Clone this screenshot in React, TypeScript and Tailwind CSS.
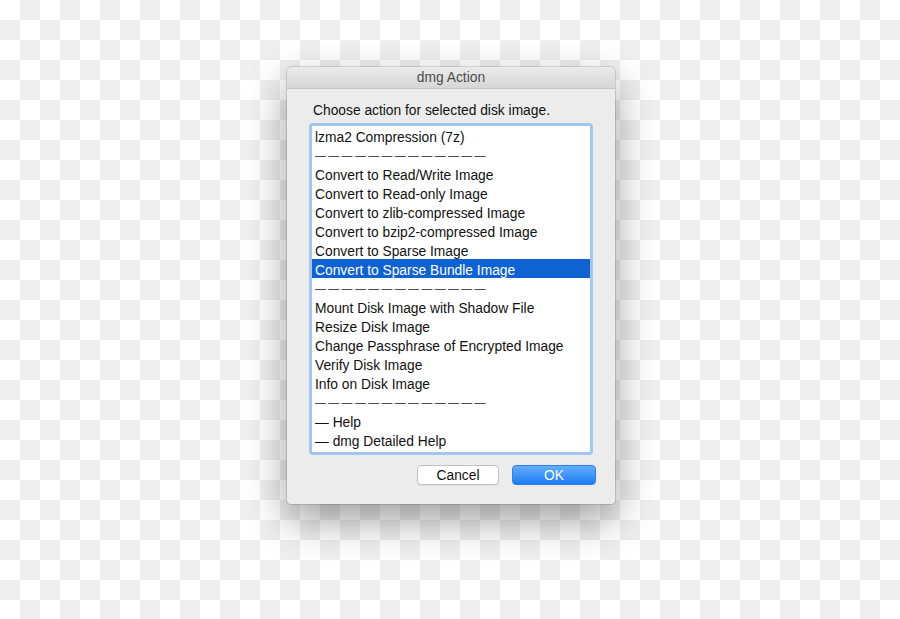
const items: { label: string; kind?: "sep" | "selected" }[] = [
  { label: "lzma2 Compression (7z)" },
  { label: "—————————————", kind: "sep" },
  { label: "Convert to Read/Write Image" },
  { label: "Convert to Read-only Image" },
  { label: "Convert to zlib-compressed Image" },
  { label: "Convert to bzip2-compressed Image" },
  { label: "Convert to Sparse Image" },
  { label: "Convert to Sparse Bundle Image", kind: "selected" },
  { label: "—————————————", kind: "sep" },
  { label: "Mount Disk Image with Shadow File" },
  { label: "Resize Disk Image" },
  { label: "Change Passphrase of Encrypted Image" },
  { label: "Verify Disk Image" },
  { label: "Info on Disk Image" },
  { label: "—————————————", kind: "sep" },
  { label: "— Help" },
  { label: "— dmg Detailed Help" },
];

export default function App() {
  return (
    <div
      className="h-[619px] w-[900px] overflow-hidden bg-[conic-gradient(#efefef_25%,#fff_0_50%,#efefef_0_75%,#fff_0)] bg-size-[40px_40px] pl-[287px] pt-[67px]"
      style={{ fontFamily: '"Liberation Sans", Arial, sans-serif' }}
    >
      {/* Dialog window */}
      <div className="w-[328px] rounded-t-[5px] rounded-b-[4px] bg-[#ececec] shadow-[0_16px_40px_rgba(0,0,0,0.38),0_0_0_1px_rgba(0,0,0,0.12)]">
        {/* Title bar */}
        <div className="flex h-[22px] items-center justify-center rounded-t-[5px] border-b border-[#c4c4c4] bg-gradient-to-b from-[#ebebeb] to-[#d6d6d6] pt-[2px] text-[13.8px] text-[#4d4d4d]">
          dmg Action
        </div>

        <div className="px-[22px] pb-[19px] pt-[13px]">
          <div className="pl-[4px] pt-[1px] text-[13.8px] leading-[16px] text-[#111]">
            Choose action for selected disk image.
          </div>

          {/* List box with focus ring */}
          <div className="mt-[4px] rounded-[4px] border-[3px] border-[#a2c5f2] bg-white pb-[3px]">
            {items.map((it, i) =>
              it.kind === "sep" ? (
                <div
                  key={i}
                  className="h-[19px] pl-[3px] pt-[1px] text-[11px] leading-[19px] tracking-[2.3px] text-[#222]"
                >
                  {it.label}
                </div>
              ) : (
                <div
                  key={i}
                  className={`h-[19px] pl-[3px] pt-[3px] text-[13.8px] leading-[17px] ${
                    it.kind === "selected"
                      ? "bg-[#0f62d2] text-white"
                      : "text-[#111]"
                  }`}
                >
                  {it.label}
                </div>
              )
            )}
          </div>

          {/* Buttons */}
          <div className="mr-[-3px] mt-[10px] flex justify-end gap-[13px]">
            <button className="h-[20px] w-[82px] rounded-[4px] border border-[#c2c2c2] bg-white pt-[1px] text-[13.8px] leading-[18px] text-[#111] shadow-[0_1px_0_rgba(0,0,0,0.05)]">
              Cancel
            </button>
            <button className="h-[20px] w-[84px] rounded-[4px] border border-[#2c7ff0] bg-gradient-to-b from-[#63aefc] to-[#1a7bf6] pt-[1px] text-[13.8px] leading-[18px] text-white">
              OK
            </button>
          </div>
        </div>
      </div>
    </div>
  );
}
